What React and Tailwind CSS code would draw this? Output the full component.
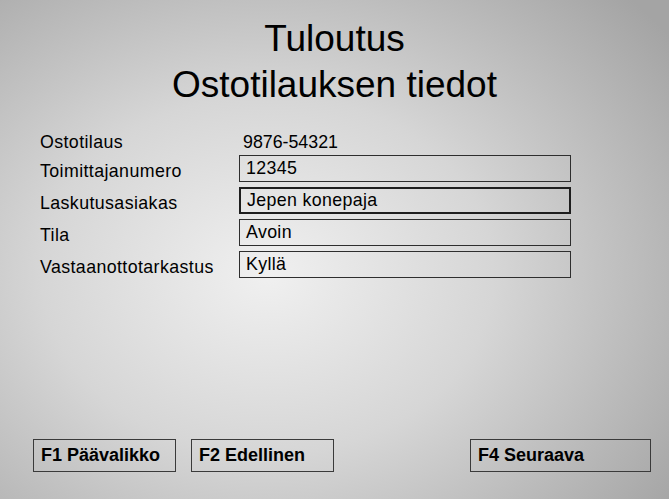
import React from 'react';

const rows = [
  { label: 'Toimittajanumero', value: '12345' },
  { label: 'Laskutusasiakas', value: 'Jepen konepaja', active: true },
  { label: 'Tila', value: 'Avoin' },
  { label: 'Vastaanottotarkastus', value: 'Kyllä' },
];

function FieldBox({ value, active }) {
  return (
    <div
      className={`w-[332px] h-[27px] flex items-center px-[6px] tracking-[0.35px] ${
        active ? 'border-2 border-[#1e1e1e]' : 'border border-[#2e2e2e]'
      }`}
    >
      {value}
    </div>
  );
}

function FnButton({ children, className = '' }) {
  return (
    <div
      className={`h-[33px] border border-[#3a3a3a] flex items-center px-[7px] font-bold text-[18px] ${className}`}
    >
      {children}
    </div>
  );
}

export default function App() {
  return (
    <div className="w-[669px] h-[499px] flex flex-col text-black font-['Liberation_Sans',Arial,sans-serif] bg-[radial-gradient(ellipse_75%_80%_at_40%_55%,#f0f0f0_0%,#d6d6d6_45%,#a4a4a4_100%)]">
      {/* Header */}
      <div className="pt-[16px] text-center text-[37px] leading-[46px]">
        <div>Tuloutus</div>
        <div>Ostotilauksen tiedot</div>
      </div>

      {/* Order details */}
      <div className="mt-[15px] pl-[40px] flex flex-col gap-[5px] text-[17.8px]">
        <div className="flex h-[27px] items-center">
          <div className="w-[199px] pt-[12px] tracking-[0.4px]">Ostotilaus</div>
          <div className="pl-[4px] pt-[12px]">9876-54321</div>
        </div>
        {rows.map((row) => (
          <div key={row.label} className="flex h-[27px] items-center">
            <div className="w-[199px] pt-[6px] tracking-[0.4px]">{row.label}</div>
            <FieldBox value={row.value} active={row.active} />
          </div>
        ))}
      </div>

      {/* Function keys */}
      <div className="mt-auto pb-[27px] pl-[33px] flex">
        <FnButton className="w-[143px]">F1 Päävalikko</FnButton>
        <FnButton className="w-[143px] ml-[15px]">F2 Edellinen</FnButton>
        <FnButton className="w-[181px] ml-[136px]">F4 Seuraava</FnButton>
      </div>
    </div>
  );
}
